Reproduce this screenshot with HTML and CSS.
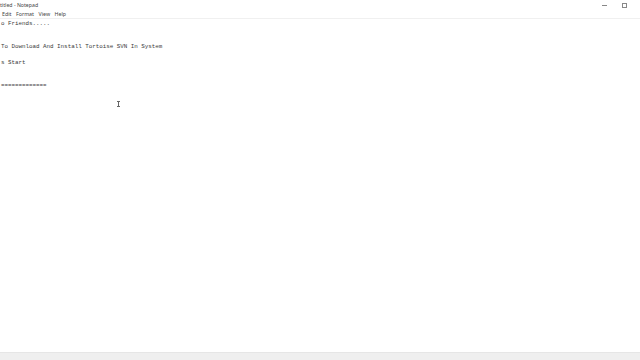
FILE: index.html
```html
<!DOCTYPE html>
<html>
<head>
<meta charset="utf-8">
<link rel="stylesheet" href="styles.css">
</head>
<body>
<div class="window">
  <div class="titlebar">
    <span class="title">titled - Notepad</span>
    <div class="controls">
      <span class="ctl min"><span class="dash"></span></span>
      <span class="ctl max"><span class="box"></span></span>
    </div>
  </div>
  <div class="menubar">
    <span class="menu">Edit</span>
    <span class="menu">Format</span>
    <span class="menu">View</span>
    <span class="menu">Help</span>
  </div>
  <div class="editor">
    <pre class="text">o Friends.....


To Download And Install Tortoise SVN In System

s Start


=============</pre>
    <span class="ibeam"></span>
  </div>
  <div class="statusbar"></div>
</div>
</body>
</html>
```
FILE: styles.css
```css
html, body {
  margin: 0;
  padding: 0;
  background: #ffffff;
}
.window {
  width: 640px;
  height: 360px;
  display: flex;
  flex-direction: column;
  overflow: hidden;
  font-family: "Noto Sans", "Open Sans", sans-serif;
  color: #333;
}
.titlebar {
  height: 10px;
  display: flex;
  align-items: center;
  justify-content: space-between;
  font-size: 5.2px;
  line-height: 10px;
}
.title {
  color: #444;
}
.controls {
  display: flex;
  height: 10px;
}
.ctl {
  width: 20px;
  height: 10px;
  display: flex;
  align-items: center;
  justify-content: center;
}
.dash {
  width: 5px;
  height: 1px;
  background: #888;
}
.box {
  width: 3px;
  height: 3px;
  border: 1px solid #888;
}
.max { margin-right: 6px; }
.menubar {
  height: 8px;
  display: flex;
  align-items: center;
  gap: 4.5px;
  padding-left: 2px;
  font-size: 5.3px;
  line-height: 8px;
  color: #444;
  border-bottom: 1px solid #f0f0f0;
}
.editor {
  flex: 1;
  position: relative;
  padding-top: 1px;
}
.text {
  margin: 0;
  font-family: "Liberation Mono", "DejaVu Sans Mono", monospace;
  font-size: 5.85px;
  line-height: 7.7px;
  color: #3a3a3a;
  padding-left: 1px;
}
.ibeam {
  position: absolute;
  left: 117px;
  top: 82px;
  width: 3px;
  height: 6px;
  border-top: 1px solid #666;
  border-bottom: 1px solid #666;
  box-sizing: border-box;
}
.ibeam::after {
  content: "";
  position: absolute;
  left: 1px;
  top: 0;
  width: 1px;
  height: 4px;
  background: #666;
}
.statusbar {
  height: 7px;
  background: #efefef;
  border-top: 1px solid #e6e6e6;
}
```
